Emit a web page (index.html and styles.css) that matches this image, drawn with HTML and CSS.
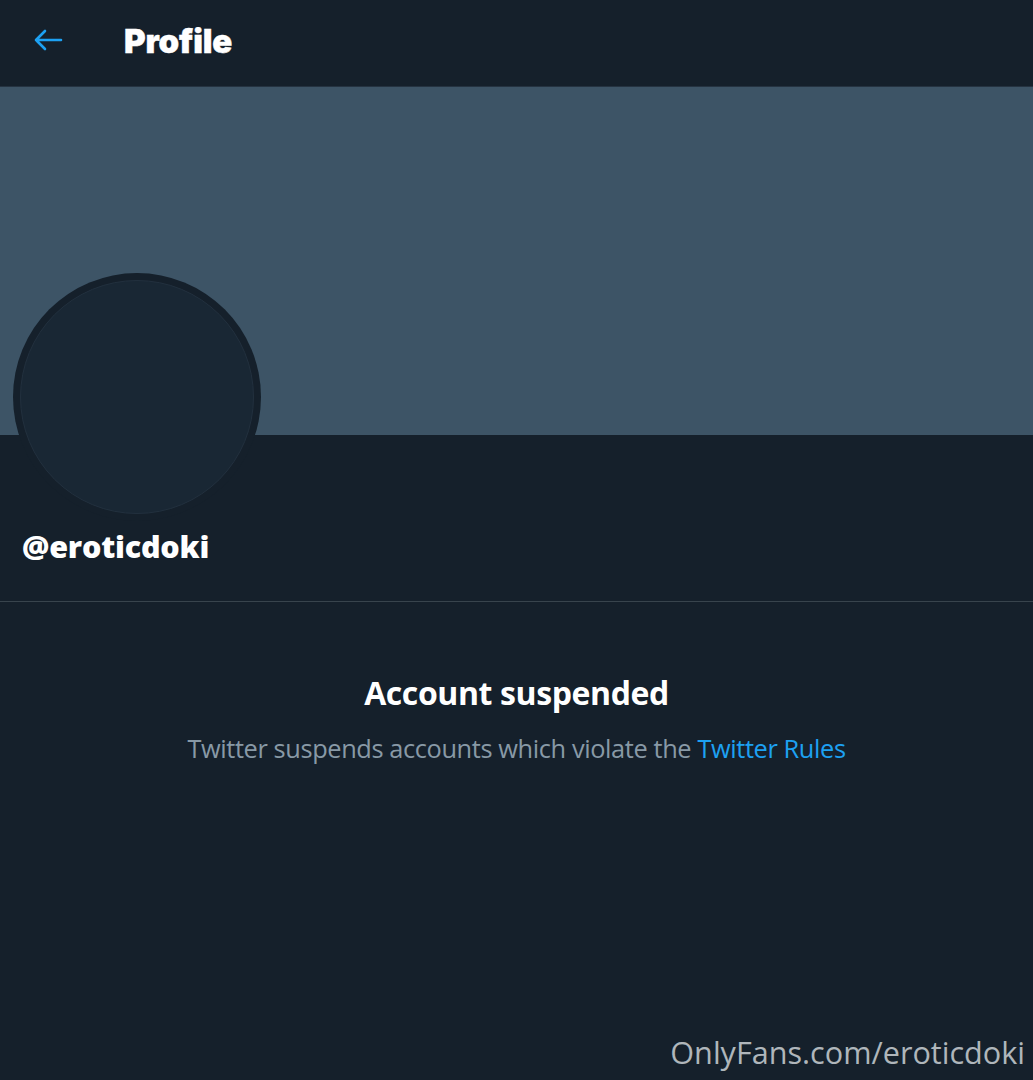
FILE: index.html
```html
<!DOCTYPE html>
<html lang="en">
<head>
<meta charset="utf-8">
<title>Profile</title>
<link rel="stylesheet" href="styles.css">
</head>
<body>
<div class="page">
  <header class="topbar">
    <div class="back">
      <svg width="30" height="22" viewBox="0 0 30 22" aria-hidden="true">
        <path d="M28 11H3M12 2L3 11l9 9" fill="none" stroke="#1da1f2" stroke-width="2.6" stroke-linecap="round" stroke-linejoin="round"/>
      </svg>
    </div>
    <h1 class="title">Profile</h1>
  </header>
  <section class="banner">
    <div class="avatar"><div class="avatar-inner"></div></div>
  </section>
  <section class="info">
    <div class="handle">@eroticdoki</div>
  </section>
  <section class="notice">
    <h2 class="notice-title">Account suspended</h2>
    <p class="notice-text">Twitter suspends accounts which violate the <a class="link" href="#">Twitter Rules</a></p>
  </section>
  <footer class="watermark">OnlyFans.com/eroticdoki</footer>
</div>
</body>
</html>
```
FILE: styles.css
```css
html, body {
  margin: 0;
  padding: 0;
  background: #15202b;
}
body {
  font-family: "Open Sans", "Noto Sans", sans-serif;
  color: #ffffff;
}
.page {
  width: 1033px;
  height: 1080px;
  position: relative;
  overflow: hidden;
  background: #15202b;
}
.topbar {
  display: flex;
  align-items: center;
  border-bottom: 1px solid #253341;
  box-sizing: border-box;
  height: 87px;
}
.back {
  width: 30px;
  margin-left: 33px;
  display: flex;
  align-items: center;
  margin-top: -6px;
}
.title {
  margin: -4px 0 0 61px;
  font-family: "Inter", "Lato", sans-serif;
  font-weight: 900;
  font-size: 33px;
  letter-spacing: -0.2px;
  -webkit-text-stroke: 0.4px #ffffff;
}
.banner {
  height: 348px;
  background: #3d5466;
  position: relative;
}
.avatar {
  position: absolute;
  left: 13px;
  top: 186px;
  width: 248px;
  height: 248px;
  border-radius: 50%;
  background: #15202b;
  display: flex;
  align-items: center;
  justify-content: center;
}
.avatar-inner {
  width: 232px;
  height: 232px;
  border-radius: 50%;
  background: #192734;
  border: 1px solid #22303e;
}
.info {
  height: 166px;
  border-bottom: 1px solid #38444d;
  display: flex;
  align-items: flex-start;
  padding: 0 22px;
}
.handle {
  margin-top: 93px;
  font-family: "Open Sans", sans-serif;
  font-weight: 800;
  font-size: 30.5px;
  line-height: 36px;
  letter-spacing: -0.2px;
}
.notice {
  display: flex;
  flex-direction: column;
  align-items: center;
  padding-top: 70px;
}
.notice-title {
  margin: 0;
  font-family: "Open Sans", sans-serif;
  font-weight: 700;
  font-size: 32px;
  line-height: 42px;
  letter-spacing: -0.4px;
}
.notice-text {
  margin: 18px 0 0;
  font-family: "Open Sans", sans-serif;
  font-size: 25.4px;
  line-height: 32px;
  color: #8899a6;
  letter-spacing: -0.4px;
}
.link {
  color: #1da1f2;
  text-decoration: none;
}
.watermark {
  position: absolute;
  right: 8px;
  bottom: 7px;
  font-family: "Open Sans", sans-serif;
  font-size: 30.6px;
  color: rgba(220, 224, 228, 0.78);
}
```
